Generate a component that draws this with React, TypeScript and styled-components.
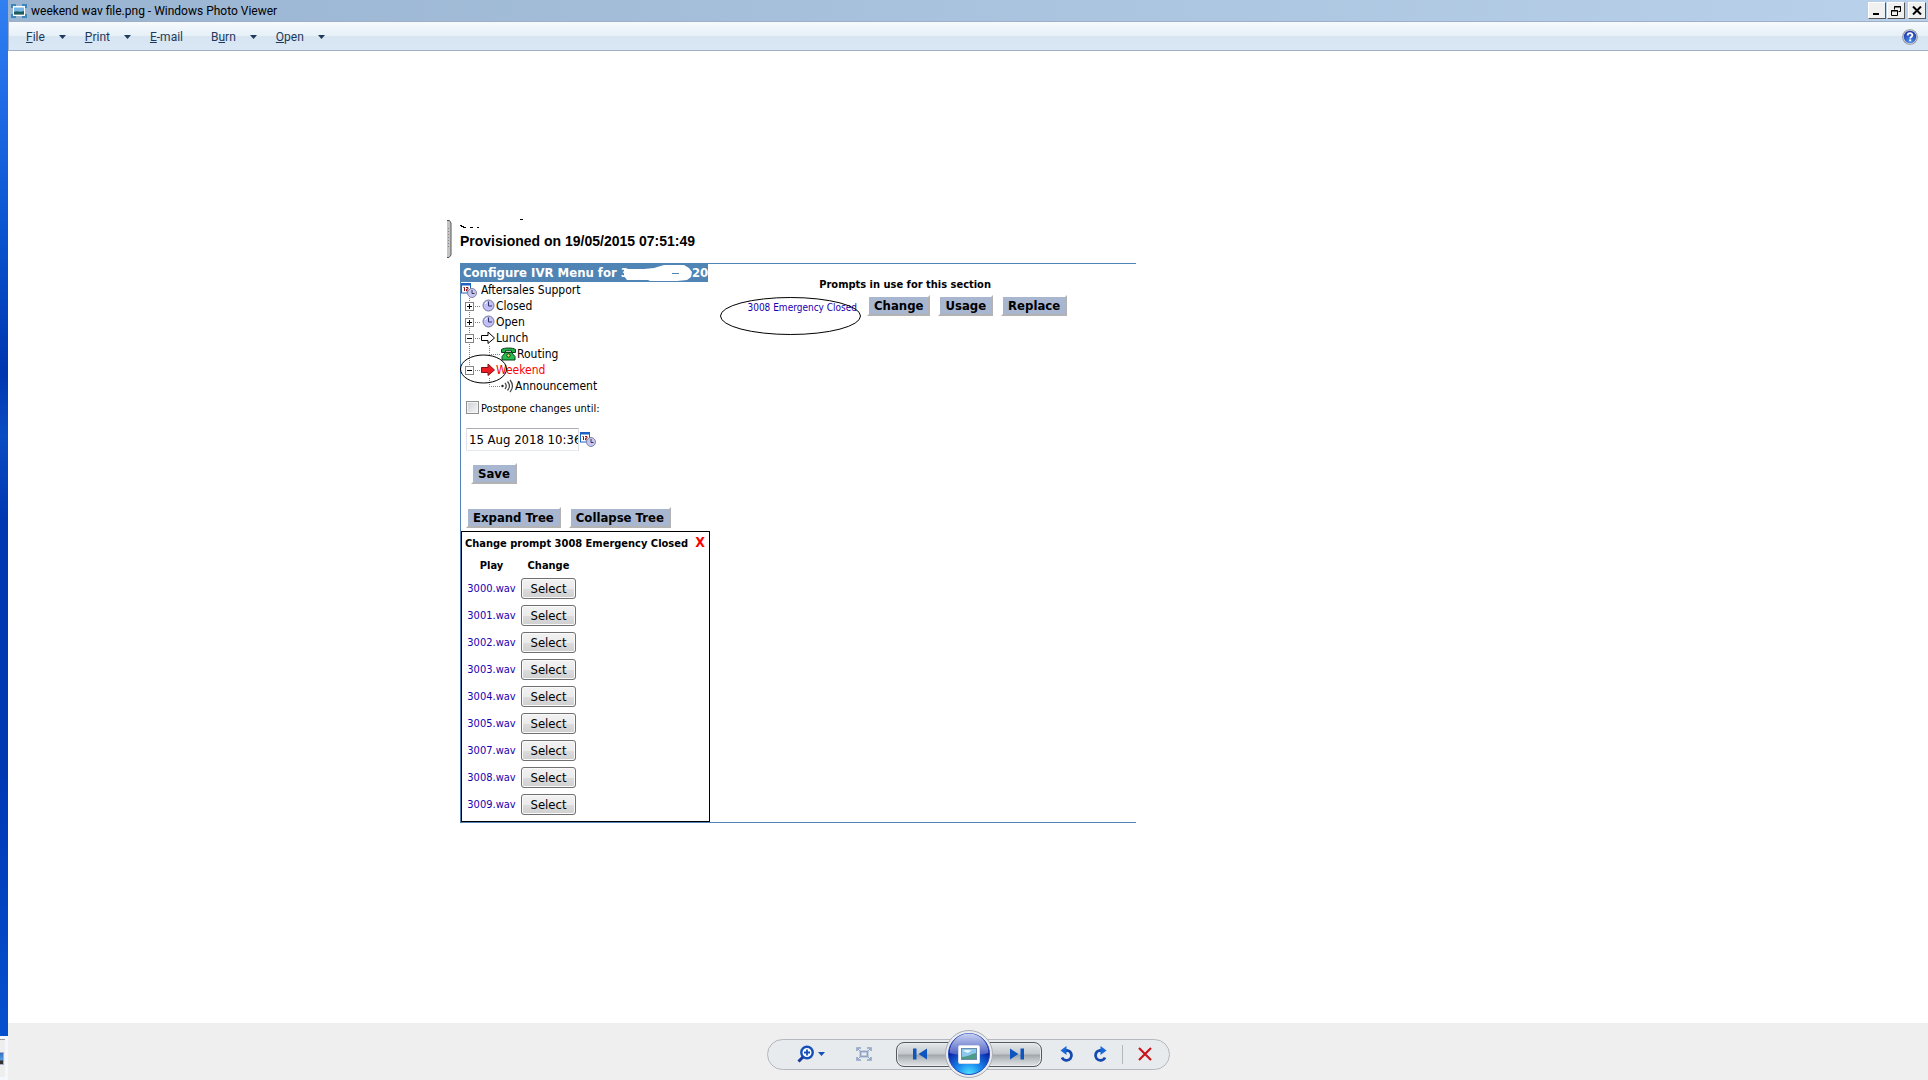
import React from "react";
import styled, { createGlobalStyle } from "styled-components";

const ui = `Roboto, "Open Sans", sans-serif`;
const web = `"DejaVu Sans Condensed", "DejaVu Sans", sans-serif`;
const steel = "#4f84b5";

const GlobalStyle = createGlobalStyle`
  *, *::before, *::after { box-sizing: border-box; }
  body { margin: 0; background: #fff; font-family: ${ui}; font-size: 12px; }
  button { margin: 0; padding: 0; border: 0; background: none; font: inherit; color: inherit; }
  svg { display: block; flex: none; }
`;

/* ---------- desktop and window frame ---------- */
const Desktop = styled.div`
  display: flex;
  min-height: 100vh;
`;
const DesktopEdge = styled.div`
  display: flex;
  flex-direction: column;
  flex: none;
  width: 8px;
`;
const Wallpaper = styled.div`
  flex: 1;
  background: linear-gradient(#3180f2 0, #1f6be6 10%, #0a55d0 22%, #0036b0 36%, #0a4cc4 42%, #0038b2 50%, #0038b4 75%, #0550ce 100%);
`;
const BehindWindow = styled.div`
  display: flex;
  flex-direction: column;
  justify-content: center;
  height: 44px;
  background: #f4f8fc;
`;
const BehindPanel = styled.div`
  height: 38px;
  margin-right: 3px;
  padding-top: 12px;
  border-top: 1px solid #999;
  background: #eee;
`;
const BehindIcon = styled.div`
  width: 4px;
  height: 13px;
  border: solid #a9aec6;
  border-width: 1px 1px 1px 0;
  background: linear-gradient(#2f6fbf, #5f9fe4 65%, #333 70%);
`;
const Window = styled.div`
  display: flex;
  flex: 1;
  flex-direction: column;
  min-width: 0;
`;
const TitleBar = styled.header`
  display: flex;
  align-items: center;
  gap: 4px;
  height: 21px;
  padding: 0 2px 0 3px;
  background: linear-gradient(90deg, #99b4d1, #b9d1ea);
`;
const Title = styled.h1`
  flex: 1;
  margin: 0;
  font-size: 12px;
  font-weight: 400;
  line-height: 20px;
  color: #000;
`;
const WindowButton = styled.button`
  display: flex;
  align-items: center;
  justify-content: center;
  width: 18px;
  height: 17px;
  border: 1px solid;
  border-color: #fff #555 #555 #fff;
  background: #f0f0f0;
  &:last-child { margin-left: 2px; }
`;
const WindowButtons = styled.div`
  display: flex;
  gap: 1px;
`;
const MenuBar = styled.nav`
  display: flex;
  align-items: center;
  gap: 19px;
  height: 30px;
  padding: 1px 10px 0 17px;
  border: 1px solid #9fafc6;
  border-right: 0;
  background: linear-gradient(#f6fafd, #e6f0f8 50%, #d7e4f1 52%, #dae7f4);
  color: #1e395b;
`;
const MenuButton = styled.button<{ $wide?: boolean }>`
  display: flex;
  align-items: center;
  gap: 14px;
  margin-right: ${(p) => (p.$wide ? "9px" : "0")};
  line-height: 16px;
`;
const HelpButton = styled.button`
  margin-left: auto;
`;

/* ---------- picture shown in the viewer ---------- */
const Canvas = styled.main`
  display: flex;
  flex: 1;
  flex-direction: column;
  align-items: center;
  padding: 164px 16px;
  background: #fff;
`;
const Picture = styled.section`
  position: relative;
  width: 100%;
  max-width: 1042px;
  padding-left: 13px;
  font-family: ${web};
  font-size: 12px;
  color: #000;
`;
const ScrollStub = styled.svg`
  position: absolute;
  left: 0;
  top: 5px;
`;
const Provisioned = styled.p`
  margin: 0;
  font: 700 14px/20px "Liberation Sans", Arial, sans-serif;
`;
const Remnant = styled.svg`
  height: 16px;
`;
const Panel = styled.div`
  display: flex;
  width: 676px;
  max-width: 100%;
  margin-top: 12px;
  border: 1px solid ${steel};
  border-right: 0;
`;
const Side = styled.div`
  position: relative;
  flex: none;
  width: 249px;
`;
const PanelTitle = styled.h2`
  display: flex;
  align-items: center;
  height: 18px;
  width: 247px;
  margin: 0;
  padding: 0 2px;
  background: ${steel};
  color: #fff;
  font-size: 13px;
  line-height: 18px;
  white-space: pre;
`;
const Tree = styled.ul`
  margin: 0;
  padding: 0;
  list-style: none;
`;
const TreeRow = styled.li<{ $active?: boolean }>`
  display: flex;
  align-items: center;
  height: 16px;
  line-height: 16px;
  color: ${(p) => (p.$active ? "#f00" : "#000")};
`;
const RootName = styled.span`
  margin-left: 4px;
`;
const Marker = styled.svg<{ $left: number; $top: number }>`
  position: absolute;
  left: ${(p) => p.$left}px;
  top: ${(p) => p.$top}px;
  pointer-events: none;
`;
const Form = styled.form`
  display: flex;
  flex-direction: column;
  align-items: flex-start;
  padding: 5px 0 3px 5px;
`;
const Postpone = styled.div`
  display: flex;
  align-items: center;
  gap: 2px;
  height: 20px;
  font-size: 11px;
  line-height: 20px;
`;
const CheckBox = styled.input`
  appearance: none;
  width: 13px;
  height: 13px;
  margin: 0 0 3px;
  border: 1px solid #8e8f8f;
  outline: 1px solid #f4f4f4;
  outline-offset: -2px;
  background: linear-gradient(135deg, #cbcfd5, #f6f6f6);
`;
const DateLine = styled.div`
  display: flex;
  align-items: center;
  gap: 1px;
  margin: 9px 0 12px;
`;
const DateInput = styled.input`
  width: 113px;
  height: 23px;
  padding: 1px 0 1px 2px;
  border: 1px solid;
  border-color: #abadb3 #dbdfe6 #e3e9ef #e2e3ea;
  border-radius: 1px;
  font: 13px ${web};
  color: #000;
`;
const FlatButton = styled.button`
  height: 21px;
  padding: 0 5px;
  border: 2px solid;
  border-color: #fff #b3b3b3 #b3b3b3 #fff;
  background: #a9b6d0;
  color: #000;
  font: 700 13px/17px ${web};
  white-space: nowrap;
`;
const SaveLine = styled.div`
  padding-left: 5px;
  margin-bottom: 23px;
`;
const ButtonLine = styled.div`
  display: flex;
  align-items: center;
  gap: 8px;
`;
const PromptBox = styled.section`
  height: 291px;
  border: 1px solid #000;
`;
const PromptHead = styled.header`
  display: flex;
  align-items: center;
  justify-content: space-between;
  height: 23px;
  padding: 0 4px 0 3px;
`;
const SmallTitle = styled.h3`
  margin: 0;
  font-size: 11px;
  line-height: 20px;
  white-space: nowrap;
`;
const CloseButton = styled.button`
  height: 18px;
  margin-bottom: 4px;
  color: #f00;
  font: 700 14px/16px ${web};
`;
const WavTable = styled.table`
  border-collapse: collapse;
  font-size: 11px;
  text-align: center;
  th, td { padding: 0; height: 27px; }
  th { height: 20px; }
  th:first-child { width: 59px; }
`;
const Link = styled.a`
  color: #1a00b0;
  text-decoration: none;
  white-space: nowrap;
`;
const SelectButton = styled.button`
  display: block;
  width: 55px;
  height: 21px;
  border: 1px solid #707070;
  border-radius: 3px;
  box-shadow: inset 0 0 0 1px #fafafa;
  background: linear-gradient(#f2f2f2, #ebebeb 50%, #dddddd 51%, #cfcfcf);
  color: #000;
  font: 13px/17px ${web};
`;
const InUse = styled.section`
  display: flex;
  flex-direction: column;
  align-items: center;
  align-self: flex-start;
  padding: 11px 0 0 33px;
`;
const InUseLine = styled.div`
  display: flex;
  align-items: center;
  gap: 8px;
`;
const PromptLink = styled(Link)`
  min-width: 114px;
  padding-top: 4px;
  margin-right: 2px;
  font-size: 10px;
  line-height: 16px;
  text-align: right;
`;

/* ---------- viewer controls ---------- */
const ControlBar = styled.footer`
  display: flex;
  align-items: center;
  justify-content: center;
  height: 57px;
  padding-top: 5px;
  background: #efefef;
`;
const Pill = styled.div`
  display: flex;
  align-items: center;
  height: 31px;
  padding: 0 9px 0 21px;
  border: 1px solid #b4b8bd;
  border-radius: 16px;
  background: #e7ebee;
`;
const IconButton = styled.button<{ $wide?: boolean; $after?: number }>`
  display: flex;
  align-items: center;
  justify-content: center;
  width: ${(p) => (p.$wide ? "44px" : "30px")};
  height: 27px;
  margin-right: ${(p) => p.$after || 0}px;
`;
const StepButton = styled.button<{ $next?: boolean }>`
  display: flex;
  align-items: center;
  justify-content: center;
  width: 55px;
  height: 25px;
  padding: ${(p) => (p.$next ? "0 0 0 6px" : "0 6px 0 0")};
  margin: ${(p) => (p.$next ? "0 10px 0 -6px" : "0 -6px 0 0")};
  border: 1px solid #55585c;
  border-radius: ${(p) => (p.$next ? "0 8px 8px 0" : "8px 0 0 8px")};
  box-shadow: inset 0 0 0 1px #e8ecef;
  background: linear-gradient(#e3e7e9, #c3c8cb 48%, #9fa6aa 52%, #c9cdd0 80%, #dfe2e4);
`;
const PlayButton = styled.button`
  z-index: 1;
  flex: none;
  width: 48px;
  height: 48px;
`;
const Separator = styled.span`
  width: 1px;
  height: 19px;
  margin: 0 7px;
  background: #b3b6ba;
`;

/* ---------- drawings ---------- */
const Caret = () => (
  <svg width="7" height="4" viewBox="0 0 7 4"><path d="M0 0h7L3.5 4z" fill="#1e395b" /></svg>
);
const AppIcon = () => (
  <svg width="16" height="14" viewBox="0 0 16 14">
    <path d="M1 4V1h4M11 1h4v3M15 10v3h-4M5 13H1v-3" fill="none" stroke="#3c86bd" strokeWidth="2" />
    <rect x="2" y="2" width="12" height="10" fill="#fff" />
    <rect x="3" y="3.500" width="10" height="7" fill="#79b8e6" />
    <path d="M3 8c3-2 6 1 10-1v3.500H3z" fill="#1c5a5c" />
  </svg>
);
const HelpIcon = () => (
  <svg width="16" height="16" viewBox="0 0 16 16">
    <defs><radialGradient id="help" cx=".5" cy=".9" r=".9"><stop offset="0" stopColor="#4b8fe8" /><stop offset="1" stopColor="#1c34a8" /></radialGradient></defs>
    <circle cx="8" cy="8" r="7.800" fill="#8c9097" />
    <circle cx="8" cy="8" r="6.900" fill="#d4d7de" />
    <circle cx="8" cy="8" r="6.200" fill="url(#help)" />
    <path d="M5.700 6.400c0-3 4.700-2.900 4.700-.2 0 1.600-2.200 1.500-2.200 3.200" fill="none" stroke="#fff" strokeWidth="1.800" />
    <rect x="7.200" y="10.400" width="2" height="1.900" fill="#fff" />
  </svg>
);
const ScheduleIcon = () => (
  <svg width="16" height="15" viewBox="0 0 16 15">
    <rect x=".5" y="1" width="9" height="9" fill="#fff" stroke="#1c62c4" />
    <rect x="0" y="0" width="10" height="2.500" fill="#1c62c4" />
    <path d="M2.500 4.500h1V8M5 4.500h2v1.700H5.500V8H7.500" fill="none" stroke="#8a1010" />
    <circle cx="11" cy="10" r="4.500" fill="#c6c6ee" stroke="#8484a8" />
    <path d="M11 7v3.500h2.500" fill="none" stroke="#33335a" />
  </svg>
);
const ClockIcon = () => (
  <svg width="15" height="16" viewBox="0 0 15 16">
    <circle cx="7.500" cy="7.500" r="5.500" fill="#c0c0f4" stroke="#7474a0" />
    <path d="M7.500 3.500v4.500H11" fill="none" stroke="#35356a" />
    <path d="M4 6l2-2" stroke="#fff" />
  </svg>
);
const ArrowIcon = ({ red }: { red?: boolean }) => (
  <svg width="15" height="16" viewBox="0 0 15 16">
    <path d="M.5 5.500H7V2l6.500 6L7 13.500V10.500H.5z" fill={red ? "#ec1c24" : "#fff"} stroke={red ? "#7c1418" : "#000"} />
  </svg>
);
const PhoneIcon = () => (
  <svg width="16" height="16" viewBox="0 0 16 16">
    <path d="M.5 3.500C3 1.500 12 1.500 14.500 3.500V6.500h-4V4.800h-6v1.700h-4z" fill="#1eb04a" stroke="#0b3d17" />
    <path d="M4.500 6.500h6l3.500 4V14H1v-3.500z" fill="#25c052" stroke="#0b3d17" />
    <circle cx="7.500" cy="9.500" r="1.700" fill="#f4e36a" stroke="#0b3d17" />
  </svg>
);
const SoundIcon = () => (
  <svg width="14" height="16" viewBox="0 0 14 16" fill="none" stroke="#444" strokeWidth="1.200">
    <circle cx="1.500" cy="8" r="1.200" fill="#222" stroke="none" />
    <path d="M4 5q2.500 3 0 6M6.500 3.500q4 4.500 0 9M9 2q5 6 0 12" />
  </svg>
);
const dots = { stroke: "#808080", strokeDasharray: "1 1", fill: "none" };
const Branch = ({ sign, last }: { sign?: "plus" | "minus"; last?: boolean }) => (
  <svg width="20" height="16" viewBox="0 0 20 16">
    <path d={last ? "M8.500 0v8" : "M8.500 0v16"} {...dots} />
    {sign && (
      <>
        <path d="M14 8.500h6" {...dots} />
        <rect x="4.500" y="4.500" width="8" height="8" fill="#fff" stroke="#848484" />
        <path d={sign === "plus" ? "M6 8.500h5M8.500 6v5" : "M6 8.500h5"} stroke="#000" />
      </>
    )}
  </svg>
);
const Gap = styled.span`
  flex: none;
  width: 20px;
`;
const Elbow = () => (
  <svg width="20" height="16" viewBox="0 0 20 16"><path d="M8.500 0v8.500H20" {...dots} /></svg>
);
const Blot = styled.svg`
  margin-left: -6px;
`;
const Redaction = () => (
  <Blot width="69" height="18" viewBox="0 0 69 18">
    <path d="M1 5h20l10-1 10-3h20l5 3 3 4-1 5-4 3-10 1H27l-2-1H4l-3-4z" fill="#fff" />
    <path d="M49 9.500h7" stroke={steel} />
  </Blot>
);
const ZoomIcon = () => (
  <svg width="28" height="18" viewBox="0 0 28 18">
    <circle cx="10" cy="7.500" r="5.700" fill="#fff" stroke="#1450b8" strokeWidth="2.400" />
    <path d="M6 12L1.500 16.500" stroke="#1a3a9a" strokeWidth="3" />
    <path d="M7 7.500h6M10 4.500v6" stroke="#1450b8" strokeWidth="1.800" />
    <path d="M21 7h7l-3.500 4z" fill="#1450b8" />
  </svg>
);
const FitIcon = () => (
  <svg width="16" height="14" viewBox="0 0 16 14" fill="none" stroke="#8fa3c4">
    <path d="M1 4V1h4M11 1h4v3M15 10v3h-4M5 13H1v-3" strokeWidth="1.600" />
    <rect x="4.500" y="4.500" width="7" height="5" strokeWidth="1.800" />
    <path d="M2 2l2 2M14 2l-2 2M2 12l2-2M14 12l-2-2" />
  </svg>
);
const StepIcon = ({ next }: { next?: boolean }) => (
  <svg width="14" height="12" viewBox="0 0 14 12">
    <path d={next ? "M0 .5L8.500 6 0 11.500zM10.500.5H14v11h-3.500z" : "M14 .5L5.500 6 14 11.500zM3.500.5H0v11h3.500z"} fill="#0f55c0" />
  </svg>
);
const RotateIcon = ({ right }: { right?: boolean }) => (
  <svg width="14" height="17" viewBox="0 0 14 17">
    <g transform={right ? "matrix(-1 0 0 1 14 0)" : undefined}>
      <path d="M5 4.500h2.500a5 5 0 1 1-5.500 7" fill="none" stroke="#1549b0" strokeWidth="2.800" />
      <path d="M6.500 0v9L.5 4.500z" fill="#1768d8" />
    </g>
  </svg>
);
const PlayIcon = () => (
  <svg width="48" height="48" viewBox="0 0 48 48">
    <defs>
      <linearGradient id="orbTop" x1="0" y1="0" x2="0" y2="1"><stop offset="0" stopColor="#c9d2f2" /><stop offset="1" stopColor="#4a5cc0" /></linearGradient>
      <radialGradient id="orb" cx=".5" cy="1" r=".75"><stop offset="0" stopColor="#4fe6ff" /><stop offset=".4" stopColor="#1b8cf0" /><stop offset="1" stopColor="#06129c" /></radialGradient>
    </defs>
    <circle cx="24" cy="24" r="23.500" fill="#e9ecf0" stroke="#a9acb2" />
    <circle cx="24" cy="24" r="20.500" fill="url(#orb)" stroke="#2446b8" />
    <path d="M4.500 23a19.500 19.500 0 0 1 39 0c-10 3-29 3-39 0z" fill="url(#orbTop)" />
    <rect x="13.500" y="15.500" width="21" height="18" rx="1.500" fill="#fff" stroke="#d5daea" />
    <rect x="16.500" y="18.500" width="15" height="11" fill="#8cc8ee" stroke="#6c8cae" />
    <path d="M17 27c5 0 9-3 14-4v6H17z" fill="#4d9a86" />
    <path d="M18 21c4-2 6 0 9-1l-4 3z" fill="#e8f6fc" />
  </svg>
);
const DeleteIcon = () => (
  <svg width="14" height="14" viewBox="0 0 14 14"><path d="M1 1l12 12M13 1L1 13" stroke="#c8161c" strokeWidth="2.200" /></svg>
);

const wavs = ["3000.wav", "3001.wav", "3002.wav", "3003.wav", "3004.wav", "3005.wav", "3007.wav", "3008.wav", "3009.wav"];

export default function App() {
  return (
    <>
      <GlobalStyle />
      <Desktop>
        <DesktopEdge>
          <Wallpaper />
          <BehindWindow><BehindPanel><BehindIcon /></BehindPanel></BehindWindow>
        </DesktopEdge>
        <Window>
          <TitleBar>
            <AppIcon />
            <Title>weekend wav file.png - Windows Photo Viewer</Title>
            <WindowButtons>
              <WindowButton aria-label="Minimize"><svg width="12" height="10"><path d="M2 8h6" stroke="#000" strokeWidth="2" /></svg></WindowButton>
              <WindowButton aria-label="Restore"><svg width="11" height="10" fill="none" stroke="#000"><path d="M3.500 3.500v-3h6v5h-2M3 1h7M.5 4.500h6v5h-6zM0 5h7" /></svg></WindowButton>
              <WindowButton aria-label="Close"><svg width="10" height="9"><path d="M1 .5l8 8M9 .5l-8 8" stroke="#000" strokeWidth="2" /></svg></WindowButton>
            </WindowButtons>
          </TitleBar>
          <MenuBar>
            <MenuButton><span><u>F</u>ile</span><Caret /></MenuButton>
            <MenuButton><span><u>P</u>rint</span><Caret /></MenuButton>
            <MenuButton $wide><span><u>E</u>-mail</span></MenuButton>
            <MenuButton><span>B<u>u</u>rn</span><Caret /></MenuButton>
            <MenuButton><span><u>O</u>pen</span><Caret /></MenuButton>
            <HelpButton aria-label="Help"><HelpIcon /></HelpButton>
          </MenuBar>

          <Canvas>
            <Picture>
              <ScrollStub width="6" height="38" viewBox="0 0 6 38">
                <path d="M0 1h2.500l1.500 2v32l-1.500 2H0z" fill="#c4c4c4" />
                <path d="M0 .5h2.500L4 3v32l-2 2.500H0" fill="none" stroke="#555" />
                <path d="M1.500 8v20" stroke="#888" strokeDasharray="1 2" />
              </ScrollStub>
              <Remnant width="64" height="16" viewBox="0 0 64 16">
                <path d="M0 10.500h2M1 11.500h3M3 12.500h3M10 12.500h3M17 12.500h2M60 4.500h3" stroke="#000" />
              </Remnant>
              <Provisioned>Provisioned on 19/05/2015 07:51:49</Provisioned>
              <Panel>
                <Side>
                  <PanelTitle>Configure IVR Menu for 3<Redaction />20</PanelTitle>
                  <Tree>
                    <TreeRow><ScheduleIcon /><RootName>Aftersales Support</RootName></TreeRow>
                    <TreeRow><Branch sign="plus" /><ClockIcon />Closed</TreeRow>
                    <TreeRow><Branch sign="plus" /><ClockIcon />Open</TreeRow>
                    <TreeRow><Branch sign="minus" /><ArrowIcon />Lunch</TreeRow>
                    <TreeRow><Branch /><Elbow /><PhoneIcon />Routing</TreeRow>
                    <TreeRow $active><Branch sign="minus" last /><ArrowIcon red />Weekend</TreeRow>
                    <TreeRow><Gap /><Elbow /><SoundIcon />Announcement</TreeRow>
                  </Tree>
                  <Marker $left={-1} $top={90} width="48" height="30" viewBox="0 0 48 30">
                    <ellipse cx="23.500" cy="15" rx="23" ry="14" fill="none" stroke="#000" />
                  </Marker>
                  <Form onSubmit={(e) => e.preventDefault()}>
                    <Postpone>
                      <CheckBox type="checkbox" id="postpone" />
                      <label htmlFor="postpone">Postpone changes until:</label>
                    </Postpone>
                    <DateLine>
                      <DateInput aria-label="Postpone date" defaultValue="15 Aug 2018 10:36" />
                      <ScheduleIcon />
                    </DateLine>
                    <SaveLine><FlatButton type="submit">Save</FlatButton></SaveLine>
                    <ButtonLine>
                      <FlatButton type="button">Expand Tree</FlatButton>
                      <FlatButton type="button">Collapse Tree</FlatButton>
                    </ButtonLine>
                  </Form>
                  <PromptBox>
                    <PromptHead>
                      <SmallTitle>Change prompt 3008 Emergency Closed</SmallTitle>
                      <CloseButton>X</CloseButton>
                    </PromptHead>
                    <WavTable>
                      <thead><tr><th>Play</th><th>Change</th></tr></thead>
                      <tbody>
                        {wavs.map((name) => (
                          <tr key={name}>
                            <td><Link href="#">{name}</Link></td>
                            <td><SelectButton>Select</SelectButton></td>
                          </tr>
                        ))}
                      </tbody>
                    </WavTable>
                  </PromptBox>
                </Side>
                <InUse>
                  <SmallTitle>Prompts in use for this section</SmallTitle>
                  <InUseLine>
                    <PromptLink href="#">3008 Emergency Closed</PromptLink>
                    <FlatButton>Change</FlatButton>
                    <FlatButton>Usage</FlatButton>
                    <FlatButton>Replace</FlatButton>
                  </InUseLine>
                </InUse>
              </Panel>
              <Marker $left={273} $top={81} width="142" height="40" viewBox="0 0 142 40">
                <ellipse cx="70.500" cy="20" rx="70" ry="18.500" fill="none" stroke="#000" />
              </Marker>
            </Picture>
          </Canvas>

          <ControlBar>
            <Pill>
              <IconButton $wide $after={16} aria-label="Zoom"><ZoomIcon /></IconButton>
              <IconButton $after={17} aria-label="Actual size"><FitIcon /></IconButton>
              <StepButton aria-label="Previous"><StepIcon /></StepButton>
              <PlayButton aria-label="Play slide show"><PlayIcon /></PlayButton>
              <StepButton $next aria-label="Next"><StepIcon next /></StepButton>
              <IconButton $after={3} aria-label="Rotate left"><RotateIcon /></IconButton>
              <IconButton aria-label="Rotate right"><RotateIcon right /></IconButton>
              <Separator />
              <IconButton aria-label="Delete"><DeleteIcon /></IconButton>
            </Pill>
          </ControlBar>
        </Window>
      </Desktop>
    </>
  );
}
